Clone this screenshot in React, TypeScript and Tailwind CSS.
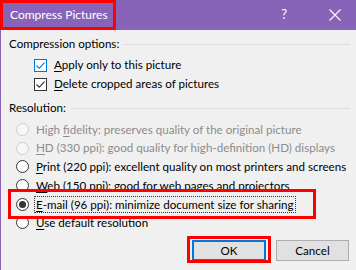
import React from "react";

function U({ c }: { c: string }) {
  return <span className="underline underline-offset-[2px]">{c}</span>;
}

function Check({ focus }: { focus?: boolean }) {
  return (
    <span
      className={
        "flex h-[13px] w-[13px] shrink-0 items-center justify-center border bg-white " +
        (focus ? "border-[#0078d7] text-[#0078d7]" : "border-[#333333] text-[#333333]")
      }
    >
      <svg width="11" height="11" viewBox="0 0 11 11">
        <path d="M1.5 5.5 L4.2 8.2 L9.6 2.6" fill="none" stroke="currentColor" strokeWidth="1.1" />
      </svg>
    </span>
  );
}

function Radio({ disabled, checked }: { disabled?: boolean; checked?: boolean }) {
  return (
    <span
      className={
        "flex h-[13px] w-[13px] shrink-0 items-center justify-center rounded-full border " +
        (disabled ? "border-[#cccccc] bg-[#f7f7f7]" : "border-[#333333] bg-white")
      }
    >
      {checked && <span className="h-[7px] w-[7px] rounded-full bg-[#333333]" />}
    </span>
  );
}

function Section({ label }: { label: string }) {
  return (
    <div className="flex h-[16px] items-center pl-[8px] pr-[6px]">
      <span className="whitespace-nowrap">{label}</span>
      <span className="ml-[5px] h-px flex-1 bg-[#dcdcdc]" />
    </div>
  );
}

function RadioRow({
  children,
  disabled,
}: {
  children: React.ReactNode;
  disabled?: boolean;
}) {
  return (
    <div
      className={
        "flex h-[18.7px] items-center gap-[7px] pl-[15px] " + (disabled ? "text-[#8c8c8c]" : "")
      }
    >
      <Radio disabled={disabled} />
      <span className="whitespace-nowrap">{children}</span>
    </div>
  );
}

export default function App() {
  return (
    <div className="h-[270px] w-[356px] overflow-hidden bg-[#f0f0f0] font-['Lato',sans-serif] text-[11.6px] text-black">
      <div className="flex h-[30px] items-center bg-[#8764b8] text-white">
        <div className="flex h-[30px] w-[116px] items-center whitespace-nowrap border-[3px] border-[#ff0000] pl-[7px] text-[12px]">
          Compress Pictures
        </div>
        <div className="flex-1" />
        <span className="mr-[42px] text-[13px]">?</span>
        <svg width="12" height="12" viewBox="0 0 12 12" className="mr-[15px]">
          <path d="M0.5 0.5 L11.5 11.5 M11.5 0.5 L0.5 11.5" stroke="white" strokeWidth="1.1" />
        </svg>
      </div>
      <div className="flex h-[240px] flex-col border-l border-[#8764b8]">
        <div className="mt-[6px]">
          <Section label="Compression options:" />
        </div>
        <div className="mt-[5px] flex h-[16px] items-center gap-[7px] pl-[33px]">
          <Check focus />
          <span>
            <U c="A" />pply only to this picture
          </span>
        </div>
        <div className="mt-[3px] flex h-[16px] items-center gap-[7px] pl-[33px]">
          <Check />
          <span>
            <U c="D" />elete cropped areas of pictures
          </span>
        </div>
        <div className="mt-[8px]">
          <Section label="Resolution:" />
        </div>
        <div className="mt-[4px] flex flex-col">
          <RadioRow disabled>
            High <U c="f" />idelity: preserves quality of the original picture
          </RadioRow>
          <RadioRow disabled>
            <U c="H" />D (330 ppi): good quality for high-definition (HD) displays
          </RadioRow>
          <RadioRow>
            <U c="P" />rint (220 ppi): excellent quality on most printers and screens
          </RadioRow>
          <RadioRow>
            <U c="W" />eb (150 ppi): good for web pages and projectors
          </RadioRow>
          <div className="relative flex h-[18.7px] items-center gap-[5px] pl-[15px]">
            <Radio checked />
            <span className="whitespace-nowrap border border-dotted border-[#333] px-[1px] leading-[15px]">
              <U c="E" />-mail (96 ppi): minimize document size for sharing
            </span>
            <span className="pointer-events-none absolute left-[7px] top-[-6px] h-[30px] w-[308px] border-[3px] border-[#ff0000]" />
          </div>
          <RadioRow>
            <U c="U" />se default resolution
          </RadioRow>
        </div>
        <div className="mt-[8px] flex justify-end gap-[10px] pr-[7px]">
          <div className="relative">
            <button className="flex h-[21px] w-[74px] items-center justify-center border-2 border-[#0078d7] bg-[#e1e1e1] text-black">
              OK
            </button>
            <span className="pointer-events-none absolute left-[-5px] top-[-4px] h-[27px] w-[84px] border-[3px] border-[#ff0000]" />
          </div>
          <button className="flex h-[21px] w-[73px] items-center justify-center border border-[#adadad] bg-[#e1e1e1] text-black">
            Cancel
          </button>
        </div>
      </div>
    </div>
  );
}
